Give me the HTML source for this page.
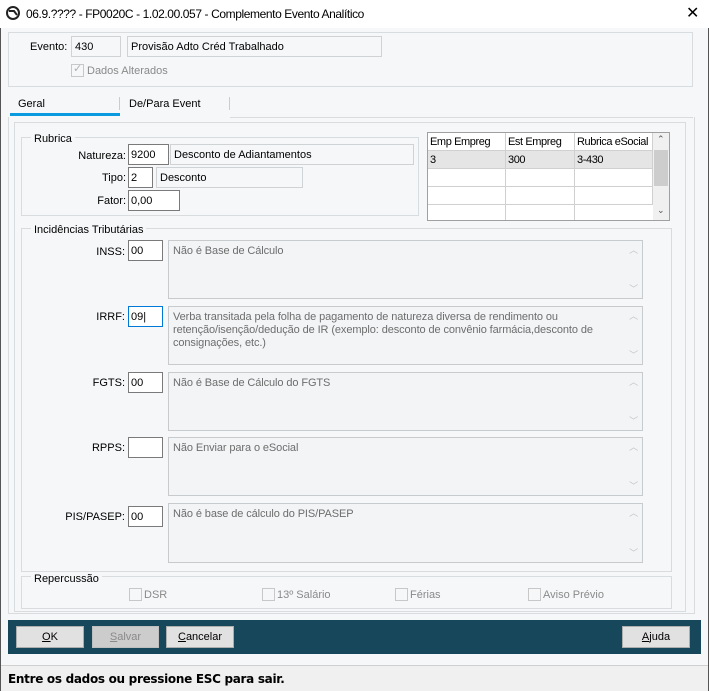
<!DOCTYPE html>
<html><head><meta charset="utf-8"><style>
*{box-sizing:border-box;margin:0;padding:0}
body{width:709px;height:691px;overflow:hidden;background:#f5f7f9;font-family:"Liberation Sans",sans-serif;font-size:11px;color:#000;position:relative}
.a{position:absolute;white-space:nowrap}
.box{position:absolute;border:1px solid #d9dcdf}
.in{position:absolute;background:#fff;border:1px solid #7a7a7a;padding:3px 2px 1px;line-height:14px;font-size:11px}
.ro{position:absolute;background:#f5f7f9;border:1px solid #d0d3d6;padding:3px 3px 1px;line-height:14px;font-size:11px}
.ta{position:absolute;background:#f2f4f6;border:1px solid #c8cbce;padding:4px 4px;line-height:13px;color:#6d6d6d;font-size:11px;letter-spacing:-0.1px}
.ta .up,.ta .dn{position:absolute;right:4px;color:#c4c4c4;font-size:9px}
.ta .up{top:3px}.ta .dn{bottom:2px}
.lbl{position:absolute;text-align:right;width:60px}
.gl{position:absolute;background:#f5f7f9;padding:0 3px}
.cb{position:absolute;width:13px;height:13px;border:1px solid #c8c8c8;background:#f5f7f9}
.btn{position:absolute;top:626px;height:22px;width:68px;background:#e1e1e1;border:1px solid #adadad;text-align:center;line-height:20px;font-size:11px}
.cell{position:absolute;border-right:1px solid #d0d0d0;border-bottom:1px solid #d0d0d0;padding:3px 2px 1px;font-size:11px;line-height:13px;white-space:nowrap;overflow:hidden;letter-spacing:-0.4px}
</style></head><body>
<div class="a" style="left:0;top:0;width:709px;height:28px;background:#fff"></div>
<svg class="a" style="left:6px;top:6px" width="14" height="14" viewBox="0 0 14 14"><circle cx="7" cy="7" r="6" fill="none" stroke="#222" stroke-width="2"/><path d="M3 5 L8 5 L11 9" fill="none" stroke="#222" stroke-width="2"/></svg>
<div class="a" style="left:26px;top:7px;font-size:12px;letter-spacing:-0.4px">06.9.???? - FP0020C - 1.02.00.057 - Complemento Evento Analítico</div>
<div class="a" style="left:686px;top:3px;font-size:16px">✕</div>
<div class="a" style="left:0;top:28px;width:1px;height:663px;background:#555"></div>
<div class="a" style="left:708px;top:28px;width:1px;height:663px;background:#555"></div>

<div class="box" style="left:8px;top:32px;width:685px;height:55px"></div>
<div class="a" style="left:30px;top:41px">Evento:</div>
<div class="ro" style="left:71px;top:36px;width:50px;height:21px">430</div>
<div class="ro" style="left:127px;top:36px;width:255px;height:21px">Provisão Adto Créd Trabalhado</div>
<div class="cb" style="left:71px;top:64px"></div>
<div class="a" style="left:73px;top:62px;color:#b0b0b0;font-size:11px">✓</div>
<div class="a" style="left:87px;top:65px;color:#8a8a8a">Dados Alterados</div>

<div class="a" style="left:18px;top:98px">Geral</div>
<div class="a" style="left:10px;top:113px;width:110px;height:3px;background:#0a9ae0"></div>
<div class="a" style="left:119px;top:97px;width:1px;height:13px;background:#ccc"></div>
<div class="a" style="left:129px;top:98px">De/Para Event</div>
<div class="a" style="left:229px;top:97px;width:1px;height:13px;background:#ccc"></div>
<div class="a" style="left:230px;top:117px;width:463px;height:1px;background:#d9dcdf"></div>
<div class="box" style="left:8px;top:117px;width:687px;height:497px;border-top:none"></div>
<div class="box" style="left:14px;top:122px;width:672px;height:490px"></div>

<div class="box" style="left:21px;top:137px;width:398px;height:79px"></div>
<div class="gl" style="left:31px;top:133px">Rubrica</div>
<div class="lbl" style="left:66px;top:150px">Natureza:</div>
<div class="in" style="left:128px;top:144px;width:41px;height:21px">9200</div>
<div class="ro" style="left:170px;top:144px;width:244px;height:21px">Desconto de Adiantamentos</div>
<div class="lbl" style="left:66px;top:172px">Tipo:</div>
<div class="in" style="left:128px;top:167px;width:25px;height:21px">2</div>
<div class="ro" style="left:156px;top:167px;width:147px;height:21px">Desconto</div>
<div class="lbl" style="left:66px;top:195px">Fator:</div>
<div class="in" style="left:128px;top:190px;width:52px;height:21px">0,00</div>

<div class="a" style="left:427px;top:132px;width:243px;height:89px;background:#fff;border:1px solid #a0a0a0"></div>
<div class="cell" style="left:428px;top:133px;width:78px;height:18px">Emp Empreg</div>
<div class="cell" style="left:506px;top:133px;width:69px;height:18px">Est Empreg</div>
<div class="cell" style="left:575px;top:133px;width:78px;height:18px">Rubrica eSocial</div>
<div class="cell" style="left:428px;top:151px;width:78px;height:18px;background:#e5e5e5">3</div>
<div class="cell" style="left:506px;top:151px;width:69px;height:18px;background:#e5e5e5">300</div>
<div class="cell" style="left:575px;top:151px;width:78px;height:18px;background:#e5e5e5">3-430</div>
<div class="cell" style="left:428px;top:169px;width:78px;height:18px"></div><div class="cell" style="left:506px;top:169px;width:69px;height:18px"></div><div class="cell" style="left:575px;top:169px;width:78px;height:18px"></div>
<div class="cell" style="left:428px;top:187px;width:78px;height:18px"></div><div class="cell" style="left:506px;top:187px;width:69px;height:18px"></div><div class="cell" style="left:575px;top:187px;width:78px;height:18px"></div>
<div class="a" style="left:505px;top:205px;width:1px;height:15px;background:#d0d0d0"></div><div class="a" style="left:574px;top:205px;width:1px;height:15px;background:#d0d0d0"></div>
<div class="a" style="left:653px;top:133px;width:16px;height:87px;background:#f0f0f0"></div>
<div class="a" style="left:654px;top:150px;width:14px;height:36px;background:#cdcdcd"></div>
<div class="a" style="left:657px;top:134px;font-size:9px;color:#555">⌃</div>
<div class="a" style="left:657px;top:205px;font-size:9px;color:#555">⌄</div>

<div class="box" style="left:21px;top:228px;width:651px;height:344px"></div>
<div class="gl" style="left:31px;top:224px">Incidências Tributárias</div>

<div class="lbl" style="left:65px;top:246px">INSS:</div>
<div class="in" style="left:128px;top:240px;width:35px;height:21px">00</div>
<div class="ta" style="left:168px;top:240px;width:475px;height:59px">Não é Base de Cálculo<span class="up">︿</span><span class="dn">﹀</span></div>

<div class="lbl" style="left:65px;top:311px">IRRF:</div>
<div class="in" style="left:128px;top:306px;width:35px;height:21px;border-color:#0078d7">09|</div>
<div class="ta" style="left:168px;top:306px;width:475px;height:59px">Verba transitada pela folha de pagamento de natureza diversa de rendimento ou retenção/isenção/dedução de IR (exemplo: desconto de convênio farmácia,desconto de consignações, etc.)<span class="up">︿</span><span class="dn">﹀</span></div>

<div class="lbl" style="left:65px;top:377px">FGTS:</div>
<div class="in" style="left:128px;top:372px;width:35px;height:21px">00</div>
<div class="ta" style="left:168px;top:372px;width:475px;height:59px">Não é Base de Cálculo do FGTS<span class="up">︿</span><span class="dn">﹀</span></div>

<div class="lbl" style="left:65px;top:442px">RPPS:</div>
<div class="in" style="left:128px;top:437px;width:35px;height:21px"></div>
<div class="ta" style="left:168px;top:437px;width:475px;height:59px">Não Enviar para o eSocial<span class="up">︿</span><span class="dn">﹀</span></div>

<div class="lbl" style="left:65px;top:511px">PIS/PASEP:</div>
<div class="in" style="left:128px;top:506px;width:35px;height:21px">00</div>
<div class="ta" style="left:168px;top:503px;width:475px;height:60px">Não é base de cálculo do PIS/PASEP<span class="up">︿</span><span class="dn">﹀</span></div>

<div class="box" style="left:21px;top:576px;width:651px;height:33px"></div>
<div class="gl" style="left:31px;top:573px">Repercussão</div>
<div class="cb" style="left:129px;top:588px"></div><div class="a" style="left:144px;top:589px;color:#8a8a8a">DSR</div>
<div class="cb" style="left:262px;top:588px"></div><div class="a" style="left:277px;top:589px;color:#8a8a8a">13º Salário</div>
<div class="cb" style="left:395px;top:588px"></div><div class="a" style="left:410px;top:589px;color:#8a8a8a">Férias</div>
<div class="cb" style="left:528px;top:588px"></div><div class="a" style="left:543px;top:589px;color:#8a8a8a">Aviso Prévio</div>

<div class="a" style="left:8px;top:620px;width:693px;height:34px;background:#17475a"></div>
<div class="btn" style="left:16px"><u>O</u>K</div>
<div class="btn" style="left:92px;width:67px;background:#cccccc;border-color:#bfbfbf;color:#8a8a8a"><u>S</u>alvar</div>
<div class="btn" style="left:166px"><u>C</u>ancelar</div>
<div class="btn" style="left:622px"><u>A</u>juda</div>

<div class="a" style="left:1px;top:665px;width:707px;height:26px;background:#f0f0f0;border-top:1px solid #d0d0d0"></div>
<div class="a" style="left:8px;top:672px;font-weight:bold;font-family:'DejaVu Sans',sans-serif;font-size:12px;letter-spacing:-0.3px">Entre os dados ou pressione ESC para sair.</div>
</body></html>
